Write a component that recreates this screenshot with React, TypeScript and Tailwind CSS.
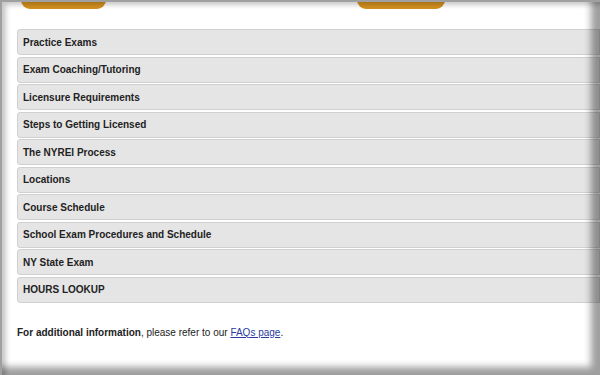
const items = [
  "Practice Exams",
  "Exam Coaching/Tutoring",
  "Licensure Requirements",
  "Steps to Getting Licensed",
  "The NYREI Process",
  "Locations",
  "Course Schedule",
  "School Exam Procedures and Schedule",
  "NY State Exam",
  "HOURS LOOKUP",
];

export default function App() {
  return (
    <div className="relative h-[375px] w-[600px] overflow-hidden bg-white font-['Liberation_Sans',Arial,sans-serif] text-[#222]">
      <div className="flex h-[10px]">
        <div className="ml-[21px] h-[9px] w-[85px] rounded-b-[9px] bg-[#d4911f]" />
        <div className="ml-[251px] h-[9px] w-[88px] rounded-b-[9px] bg-[#d4911f]" />
      </div>

      <div className="mt-[19px] ml-[17px] flex flex-col gap-[1.5px]">
        {items.map((label) => (
          <div
            key={label}
            className="flex h-[26px] items-center rounded-l-[3px] border border-[#d0d0d0] bg-[#e5e5e5] pl-[5px] text-[10px] font-bold"
          >
            {label}
          </div>
        ))}
      </div>

      <p className="mt-[22px] ml-[17px] text-[10px]">
        <span className="font-bold">For additional information</span>, please refer to our{" "}
        <a href="#" className="text-[#2a3aa0] underline">
          FAQs page
        </a>
        .
      </p>

      <div className="pointer-events-none absolute inset-0 border-t-[2px] border-l-[2px] border-[#a0a0a0] shadow-[inset_4px_3px_5px_rgba(0,0,0,0.22),inset_-9px_-8px_7px_rgba(0,0,0,0.38)]" />
    </div>
  );
}
